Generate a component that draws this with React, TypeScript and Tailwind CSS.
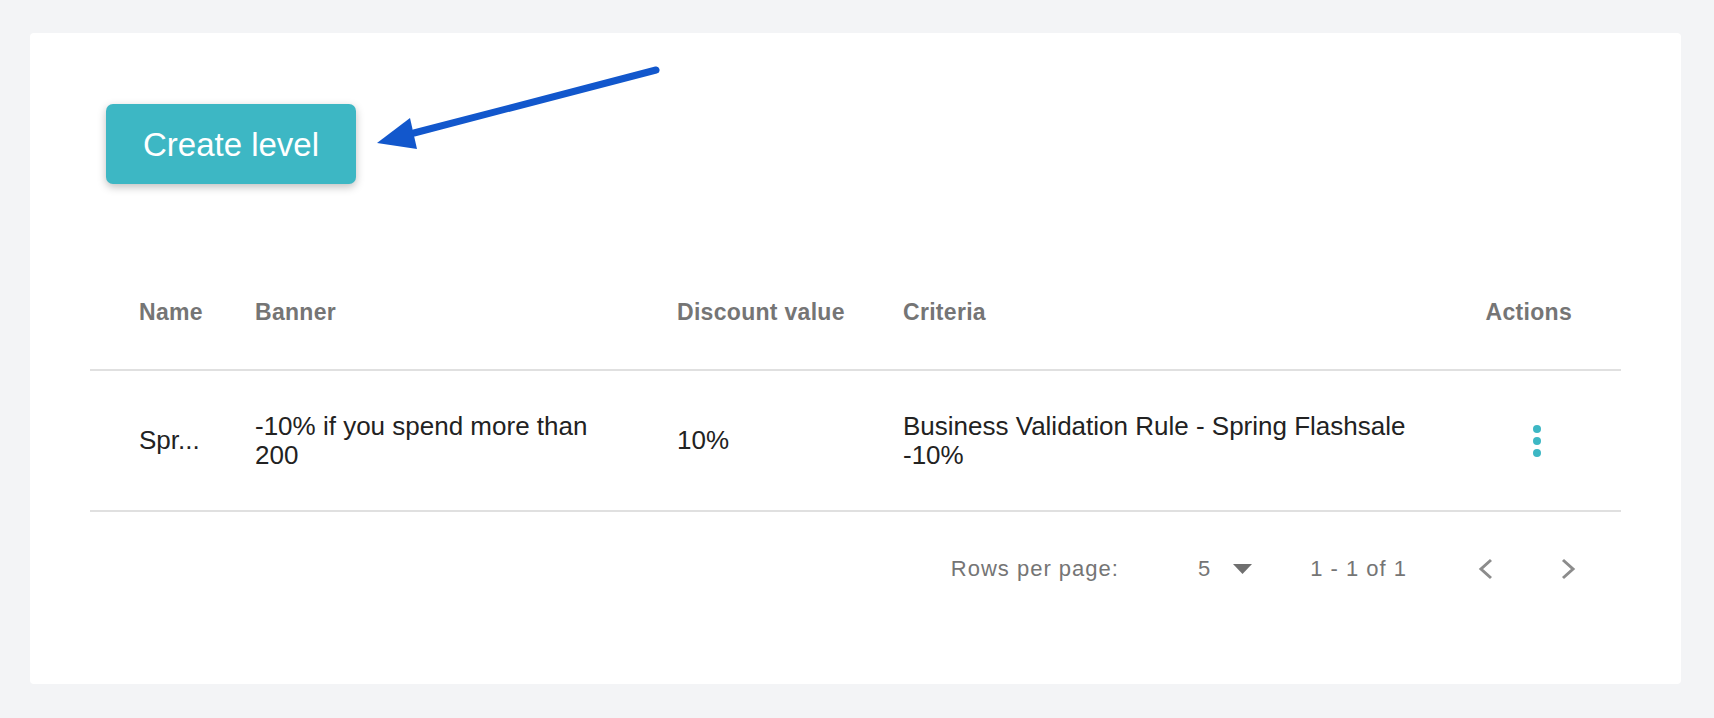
export default function App() {
  return (
    <div className="relative min-h-screen bg-[#f3f4f6] pt-[33px] pl-[30px] pr-[33px] pb-[34px] font-['Liberation_Sans',Arial,sans-serif]">
      <div className="bg-white rounded-[4px] px-[60px] pt-[71px] pb-[58px]">
        <button className="ml-[16px] w-[250px] h-[80px] rounded-[7px] bg-[#3db7c4] text-white text-[33px] leading-none shadow-[0_3px_8px_rgba(0,0,0,0.25)]">
          Create level
        </button>

        <div className="mt-[71px]">
          {/* head */}
          <div className="grid grid-cols-[116px_422px_226px_1fr_87px] items-center h-[116px] px-[49px] border-b-2 border-[#e0e0e0] text-[23px] leading-none font-bold tracking-[0.3px] text-[#757575]">
            <div>Name</div>
            <div>Banner</div>
            <div>Discount value</div>
            <div>Criteria</div>
            <div className="text-right">Actions</div>
          </div>

          {/* row */}
          <div className="grid grid-cols-[116px_422px_226px_1fr_87px] items-center h-[141px] px-[49px] border-b-2 border-[#e0e0e0] text-[26px] leading-[29px] text-[#222222]">
            <div>
              <div className="w-[72px] whitespace-nowrap overflow-hidden">Spr...</div>
            </div>
            <div className="pr-[60px]">-10% if you spend more than 200</div>
            <div>10%</div>
            <div className="pr-[40px]">Business Validation Rule - Spring Flashsale -10%</div>
            <div className="flex justify-end">
              <button className="w-[70px] h-[48px] flex flex-col items-center justify-center gap-[4px]">
                <span className="w-[8px] h-[8px] rounded-full bg-[#3db7c4]" />
                <span className="w-[8px] h-[8px] rounded-full bg-[#3db7c4]" />
                <span className="w-[8px] h-[8px] rounded-full bg-[#3db7c4]" />
              </button>
            </div>
          </div>

          {/* pagination */}
          <div className="flex items-center justify-end h-[114px] pr-[45px] text-[22px] leading-none tracking-[1px] text-[#757575]">
            <span>Rows per page:</span>
            <span className="ml-[79px]">5</span>
            <svg className="ml-[22px]" width="19" height="10" viewBox="0 0 19 10">
              <polygon points="0,0 19,0 9.5,10" fill="#6f6f6f" />
            </svg>
            <span className="ml-[58px]">1 - 1 of 1</span>
            <svg className="ml-[71px]" width="16" height="22" viewBox="0 0 16 22">
              <polyline points="13,2 3,11 13,20" fill="none" stroke="#8c8c8c" strokeWidth="3" />
            </svg>
            <svg className="ml-[66px]" width="16" height="22" viewBox="0 0 16 22">
              <polyline points="3,2 13,11 3,20" fill="none" stroke="#8c8c8c" strokeWidth="3" />
            </svg>
          </div>
        </div>
      </div>

      {/* annotation arrow */}
      <svg className="absolute left-[370px] top-[60px]" width="295" height="95" viewBox="0 0 295 95">
        <line x1="286" y1="10" x2="44" y2="73" stroke="#1257cc" strokeWidth="7" strokeLinecap="round" />
        <polygon points="7,83 40,58 47,89" fill="#1257cc" />
      </svg>
    </div>
  );
}
